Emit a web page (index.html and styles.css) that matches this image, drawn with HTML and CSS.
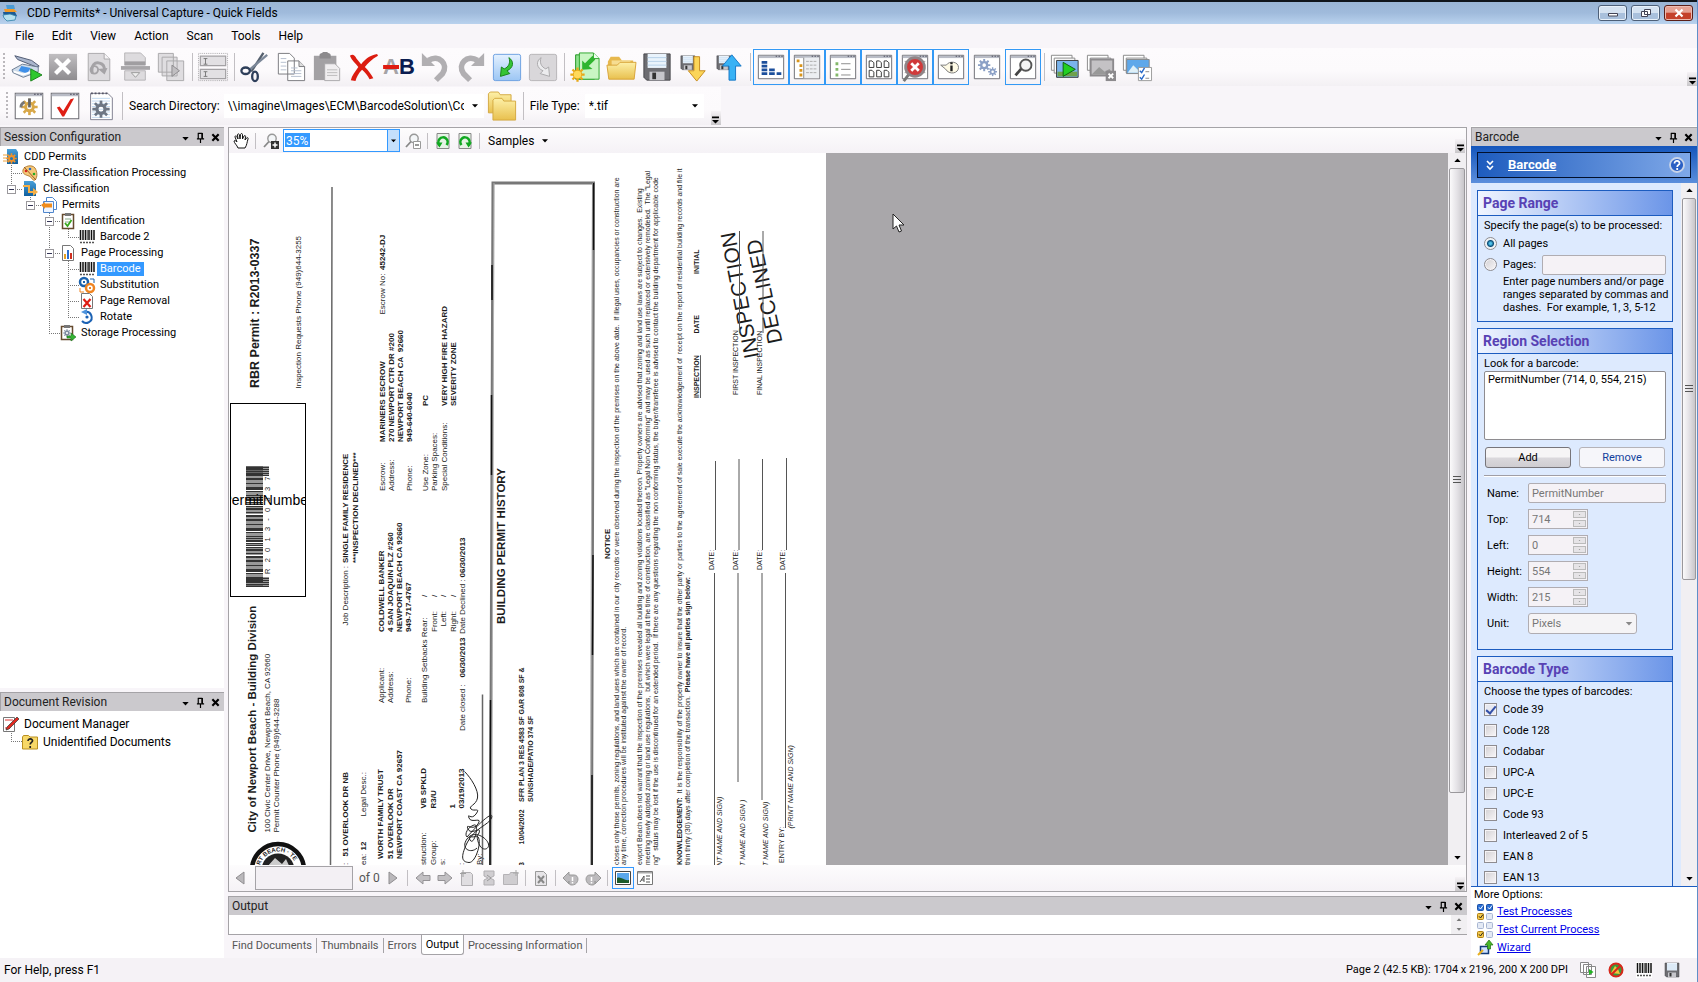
FILE: index.html
```html
<!DOCTYPE html>
<html lang="en">
<head>
<meta charset="utf-8">
<title>CDD Permits* - Universal Capture - Quick Fields</title>
<link rel="stylesheet" href="styles.css">
</head>
<body>
<svg class="defs" width="0" height="0" aria-hidden="true">
<defs>
<linearGradient id="gy" x1="0" y1="0" x2="0" y2="1"><stop offset="0" stop-color="#fdf0a8"/><stop offset="1" stop-color="#e8c04e"/></linearGradient>
<linearGradient id="gg" x1="0" y1="0" x2="0" y2="1"><stop offset="0" stop-color="#c0bec1"/><stop offset="1" stop-color="#8e8c8f"/></linearGradient>
<linearGradient id="gb" x1="0" y1="0" x2="0" y2="1"><stop offset="0" stop-color="#e4f1ff"/><stop offset="1" stop-color="#9cc6f4"/></linearGradient>
<linearGradient id="gn" x1="0" y1="0" x2="0" y2="1"><stop offset="0" stop-color="#4aa0d8"/><stop offset="1" stop-color="#0f5f9e"/></linearGradient>
<symbol id="win" viewBox="0 0 32 32"><path d="M2.500 3.500h27v25h-27z" fill="#fff" stroke="#6a6a70"/><path d="M3 4h26v2.500h-26z" fill="#b9bcc6"/><path d="M21 4.500h1.500M24 4.500h1.500M27 4.500h1.500" stroke="#445"/></symbol>
<symbol id="gear" viewBox="-10 -10 20 20"><g fill="none" stroke="currentColor" stroke-width="4"><circle r="4.500" stroke-width="3.500"/><path d="M0-9.500V-5M0 9.500V5M-9.500 0H-5M9.500 0H5M-6.700-6.700L-4-4M6.700 6.700L4 4M-6.700 6.700L-4 4M6.700-6.700L4-4" stroke-width="3"/></g></symbol>
<symbol id="page" viewBox="0 0 32 32"><path d="M4.500 1.500h17l6 6v23h-23z" fill="#dddbde" stroke="#a9a7aa"/><path d="M21.500 1.500v6h6" fill="#f6f4f6" stroke="#a9a7aa"/></symbol>
<symbol id="floppy" viewBox="0 0 32 32"><path d="M2 2h28v28h-25l-3-3z" fill="#6d6d72" stroke="#45454a"/><path d="M6 2h20v15H6z" fill="#e9f3fc"/><path d="M6 6h20M6 10h20M6 14h20" stroke="#b4cfe8" stroke-width="1"/><path d="M8 21h16v9H8z" fill="#c6c6cb"/><path d="M11 22h4v7h-4z" fill="#333"/></symbol>
<symbol id="pics" viewBox="0 0 32 32"><path d="M1.500 3.500h22v16h-22z" fill="#fff" stroke="#888"/><path d="M4.500 6.500h22v16h-22z" fill="#fff" stroke="#888"/></symbol>
<symbol id="bars" viewBox="0 0 16 16"><path d="M0 0h16v16H0z" fill="#fff"/><path d="M1.500 1v10M4 1v10M6.500 1v10M10 1v10M12.500 1v10M15 1v10" stroke="#111" stroke-width="1.500"/><path d="M8.300 1v10" stroke="#111" stroke-width=".7"/><path d="M1 13.500h14" stroke="#555" stroke-width="1.500" stroke-dasharray="2 1"/></symbol>
<symbol id="pin" viewBox="0 0 10 12"><path d="M2.500 1v6M1 7.500h8M7 1v6M2 1.500h5M5 8v4" fill="none" stroke="#000" stroke-width="1.300"/><path d="M6 1h1.600v6H6z"/></symbol>
<symbol id="cross" viewBox="0 0 10 10"><path d="M1.500 1.500l7 7M8.500 1.500l-7 7" stroke="#000" stroke-width="2.400"/></symbol>
<symbol id="down" viewBox="0 0 8 5"><path d="M0 0h8L4 4.500z"/></symbol>
<symbol id="more" viewBox="0 0 8 9"><path d="M0 0h8v2H0zM0 4h8L4 8z"/></symbol>
<symbol id="magnifier" viewBox="0 0 16 16"><circle cx="9" cy="5.500" r="4.200" fill="#f4f6f8" stroke="#999" stroke-width="1.400"/><path d="M6 8.500L1 14" stroke="#888" stroke-width="1.800"/></symbol>
<symbol id="rotate" viewBox="0 0 14 16"><path d="M1 .500h12v15H1z" fill="#e6f3e6" stroke="#888"/><path d="M4 12.500A4.600 4.600 0 1 1 10.500 12" fill="none" stroke="#10a820" stroke-width="2.600"/><path d="M0 9.500h6.500L3.500 14.500z" fill="#10a820"/></symbol>
<symbol id="garrow" viewBox="0 0 16 16"><path d="M1 8l7-6v3.500h7v5H8V14z" fill="#c2c0c3" stroke="#959396"/></symbol>
<symbol id="checks" viewBox="0 0 16 16"><rect x=".5" y="9.500" width="6" height="6" rx="1" fill="#f4c94c" stroke="#b07f10"/><path d="M2 12.300l1.500 1.700L6 10.500" fill="none" stroke="#222"/><rect x="9.500" y="9.500" width="6" height="6" rx="1" fill="#e3e9f4" stroke="#a9b6d2"/></symbol>
</defs>
</svg>

<header class="titlebar">
  <svg class="i16" viewBox="0 0 16 16"><path d="M4 0h8l1 4H5z" fill="#4b9bd2"/><path d="M2 4h10l3 3H3z" fill="#f09a28"/><path d="M1 7h12l2 4-3 1H2z" fill="#1c5a94"/><path d="M1 10l7-1 6 2-1 4-8 1-3-3z" fill="#b5e0ee" stroke="#2e7fa8" stroke-width=".8"/></svg>
  <h1>CDD Permits* - Universal Capture - Quick Fields</h1>
  <div class="winbtns">
    <button type="button" aria-label="Minimize"><svg viewBox="0 0 12 10"><path d="M1.500 5.500h9v2.500h-9z" fill="#fff" stroke="#445"/></svg></button>
    <button type="button" aria-label="Restore"><svg viewBox="0 0 12 10"><path d="M4.500 1.500h6v5h-6zM1.500 3.500h6v5h-6z" fill="#fff" stroke="#445"/></svg></button>
    <button type="button" class="close" aria-label="Close"><svg viewBox="0 0 12 10"><path d="M2.500 1.500l7 7M9.500 1.500l-7 7" stroke="#fff" stroke-width="2.200"/></svg></button>
  </div>
</header>

<nav class="menubar">
  <button type="button">File</button><button type="button">Edit</button><button type="button">View</button><button type="button">Action</button><button type="button">Scan</button><button type="button">Tools</button><button type="button">Help</button>
</nav>

<div class="toolbar main" role="toolbar" aria-label="Standard">
  <i class="grip"></i>
  <button type="button" aria-label="Scan"><svg viewBox="0 0 32 32"><path d="M3 4l18 5 8 6-3 1-20-8z" fill="#a9b5cc" stroke="#4b556e"/><path d="M0 19l11-6 17 3v5L12 27 1 22z" fill="#cfdcea" stroke="#6a7a90"/><path d="M10 15l10 2-4 6-9-3z" fill="#3f8fe8"/><path d="M2 21l10 3 10-3" fill="none" stroke="#fff" stroke-width="2"/><path d="M20 18l12 6.500L20 31z" fill="#2ec82e" stroke="#178017"/></svg></button>
  <button type="button" aria-label="Stop"><svg viewBox="0 0 32 32"><path d="M1 2h30v28H1z" fill="url(#gg)"/><path d="M8 8l15 15M23 8L8 23" stroke="#fff" stroke-width="4.500"/></svg></button>
  <button type="button" aria-label="Rescan page"><svg viewBox="0 0 32 32"><use href="#page"/><path d="M9 23c-2-9 3-13 8-11 5 1 5 5 5 8" fill="none" stroke="#a5a3a6" stroke-width="3"/><path d="M15 18l10-1-3 7z" fill="#a5a3a6"/><circle cx="11" cy="19" r="4" fill="none" stroke="#a5a3a6" stroke-width="2"/></svg></button>
  <button type="button" aria-label="Split page"><svg viewBox="0 0 32 32"><path d="M5 1h17l5 5v8H5zM5 20h22v10H5z" fill="#dddbde" stroke="#b5b3b6"/><path d="M5 10h22v4H5z" fill="#a09ea1"/><path d="M1 15h31v4H1z" fill="#a8a6a9"/><path d="M12 22h9l-4.500 5z" fill="#eee" stroke="#999"/></svg></button>
  <button type="button" aria-label="Process pages"><svg viewBox="0 0 32 32"><path d="M2.500 1.500h16v20h-16zM6.500 5.500h16v20h-16zM11.500 9.500h18v21h-18z" fill="#dfdde0" stroke="#a9a7aa"/><path d="M17 14v12l8-6z" fill="#c0bec1" stroke="#8c8a8d"/></svg></button>
  <i class="sep"></i>
  <button type="button" aria-label="Fields"><svg viewBox="0 0 32 32"><path d="M.5 1.500h31v29H.5z" fill="none" stroke="#a9a7aa" stroke-dasharray="1 1"/><path d="M2.500 4.500h27v10h-27zM2.500 18.500h27v10h-27z" fill="#e2e0e3" stroke="#a3a1a4" stroke-width="1.300"/><path d="M6 7h4M8 7v6M6 13h4M6 21h4M8 21v5M6 26h4" stroke="#777"/></svg></button>
  <i class="sep"></i>
  <button type="button" aria-label="Cut"><svg viewBox="0 0 32 32"><path d="M25 1L12 21" stroke="#55606e" stroke-width="2.500"/><path d="M29 3L10 19" stroke="#7b8798" stroke-width="2.500"/><g fill="none" stroke="#2e3f5a" stroke-width="2.500"><ellipse cx="6" cy="20" rx="4.500" ry="3.500"/><ellipse cx="16" cy="26" rx="3" ry="5"/></g></svg></button>
  <button type="button" aria-label="Copy"><svg viewBox="0 0 32 32"><path d="M2.500 1.500h12l5 5v17h-17zM12.500 9.500h12l6 6v15h-18z" fill="#fff" stroke="#77777c"/><path d="M24.500 9.500v6h6" fill="#ddd" stroke="#77777c"/><path d="M5 7h6M5 11h6M5 15h6M5 19h6M16 17h7M16 20h11M16 23h11M16 26h11" stroke="#b4bece"/></svg></button>
  <button type="button" aria-label="Paste"><svg viewBox="0 0 32 32"><path d="M2 4h24v26H2z" fill="#a3a1a4"/><path d="M8 4c0-3 2-2 4-4h4c2 2 4 1 4 4v3H8z" fill="#8c8a8d"/><path d="M13.500 12.500h11l5 5v13h-16z" fill="#f0eef0" stroke="#a9a7aa"/><path d="M16 19h11M16 22h11M16 25h11" stroke="#bbb"/></svg></button>
  <button type="button" aria-label="Delete"><svg viewBox="0 0 32 32"><path d="M2 4c3-2 5-1 7 3l5 6c4-5 8-9 17-11l1 2c-7 4-11 8-14 12 4 4 7 8 9 12l-4 1c-2-4-5-7-8-10-4 4-6 8-7 12l-5-1c1-5 5-9 8-14C8 12 4 9 2 4z" fill="#dc1c10"/></svg></button>
  <button type="button" aria-label="Replace text" class="ab"><s>A</s><b>B</b></button>
  <button type="button" aria-label="Undo"><svg viewBox="0 0 32 32"><path d="M9 9c11-7 22 4 15 14l-7 7" fill="none" stroke="#b1afb2" stroke-width="6"/><path d="M2 1v14h14z" fill="#b1afb2"/></svg></button>
  <button type="button" aria-label="Redo"><svg viewBox="0 0 32 32"><path d="M23 9C12 2 1 13 8 23l7 7" fill="none" stroke="#b1afb2" stroke-width="6"/><path d="M30 1v14H16z" fill="#b1afb2"/></svg></button>
  <button type="button" aria-label="Apply"><svg viewBox="0 0 32 32"><rect x="1.500" y="2.500" width="29" height="28" rx="2" fill="url(#gb)" stroke="#6a9ee0"/><path d="M18 6c6 4 5 11-2 14l3 3-10 3 1-10 3 2c5-2 7-7 5-12z" fill="#35c435" stroke="#168016"/></svg></button>
  <button type="button" aria-label="Revert"><svg viewBox="0 0 32 32"><rect x="1.500" y="2.500" width="29" height="28" rx="2" fill="#d9d7da" stroke="#b5b3b6"/><path d="M14 6c-6 4-5 11 2 14l-3 3 10 3-1-10-3 2c-5-2-7-7-5-12z" fill="#ececee" stroke="#a9a7aa"/></svg></button>
  <i class="sep"></i>
  <button type="button" aria-label="New session"><svg viewBox="0 0 32 32"><path d="M6 3h20v26H6z" fill="#8fe08f" stroke="#1d941d"/><path d="M10 1h15l6 6v22H10z" fill="#c9f5c4" stroke="#2aa52a"/><path d="M27 8L20 15l4 3-11 1V9l3 3 8-8z" fill="#2fb52f"/><path d="M25 1v6h6" fill="#effff0" stroke="#2aa52a"/><g color="#e8a818"><use href="#gear" x="0" y="16" width="16" height="16"/></g><circle cx="8" cy="24" r="4" fill="#ffd95a"/></svg></button>
  <button type="button" aria-label="Open"><svg viewBox="0 0 32 32"><path d="M2 10l3-5h9l3 4h12v8H2z" fill="#e7b84d"/><path d="M6 9h20v9H6z" fill="#f6dd92"/><path d="M1 14h11l3-3h17l-2 18H3z" fill="url(#gy)" stroke="#d7a236"/></svg></button>
  <button type="button" aria-label="Save"><svg viewBox="0 0 32 32"><use href="#floppy"/></svg></button>
  <button type="button" aria-label="Save down"><svg viewBox="0 0 32 32"><use href="#floppy" x="2" y="3" width="17" height="17"/><path d="M17 5h6v15h6L20 31 11 20h6z" fill="#fbd558" stroke="#c48a1c"/></svg></button>
  <button type="button" aria-label="Publish"><svg viewBox="0 0 32 32"><use href="#floppy" x="2" y="3" width="17" height="17"/><path d="M16 30h7V15h6L19 3 9 15h7z" fill="#38b2f5" stroke="#1575c4"/></svg></button>
  <i class="sep"></i>
  <button type="button" class="on" aria-label="Statistics"><svg viewBox="0 0 32 32"><use href="#win"/><path d="M6 11h6M6 15h6M6 19h6M6 23h6M14 19h6M14 23h6M22 23h5" stroke="#1c4f9c" stroke-width="3"/></svg></button>
  <button type="button" class="on" aria-label="Session pane"><svg viewBox="0 0 32 32"><use href="#win"/><path d="M12 6h17v22H12z" fill="#eceef2"/><path d="M5 8h3v3H5zM8 13h3v3H8zM8 18h3v3H8zM8 23h3v3H8z" fill="#d8941c"/><path d="M12.500 6v22" stroke="#888"/><path d="M15 10h12M15 14h12M15 18h12M15 22h12" stroke="#aaa" stroke-dasharray="3 1"/></svg></button>
  <button type="button" class="on" aria-label="List pane"><svg viewBox="0 0 32 32"><use href="#win"/><path d="M8 11h3v3H8zM8 17h3v3H8zM8 23h3v3H8z" fill="#83b86a"/><path d="M14 12.500h10M14 18.500h10M14 24.500h10" stroke="#888"/></svg></button>
  <button type="button" class="on" aria-label="Thumbnails pane"><svg viewBox="0 0 32 32"><use href="#win"/><path d="M5.500 9.500h3l2 2v5h-5zM13.500 9.500h3l2 2v5h-5zM21.500 9.500h3l2 2v5h-5zM5.500 19.500h3l2 2v5h-5zM13.500 19.500h3l2 2v5h-5zM21.500 19.500h3l2 2v5h-5z" fill="#fff" stroke="#333"/></svg></button>
  <button type="button" class="on" aria-label="Errors pane"><svg viewBox="0 0 32 32"><use href="#win"/><path d="M5 10h22M5 14h22M5 18h22M5 22h22" stroke="#999"/><path d="M10 23L4 31" stroke="#777" stroke-width="3"/><circle cx="16" cy="16" r="10" fill="#d0393a" stroke="#8f8487" stroke-width="3"/><path d="M12 12l8 8M20 12l-8 8" stroke="#fff" stroke-width="3"/></svg></button>
  <button type="button" class="on" aria-label="Information pane"><svg viewBox="0 0 32 32"><use href="#win"/><path d="M5 14l6 0c3-5 13-4 13 2.500S14 25 10 18z" fill="#fffbe6" stroke="#777"/><path d="M16.500 11v2M16.500 14.500v6" stroke="#222" stroke-width="2.500"/></svg></button>
  <button type="button" aria-label="Options"><svg viewBox="0 0 32 32"><use href="#win"/><g color="#8ba0c6"><use href="#gear" x="6" y="7" width="14" height="14"/><use href="#gear" x="17" y="16" width="10" height="10"/></g></svg></button>
  <button type="button" class="on" aria-label="Find"><svg viewBox="0 0 32 32"><use href="#win"/><circle cx="19" cy="14" r="6" fill="#f4f4f4" stroke="#555" stroke-width="2"/><path d="M14 18l-6 7" stroke="#444" stroke-width="3"/></svg></button>
  <i class="sep"></i>
  <button type="button" aria-label="Run"><svg viewBox="0 0 32 32"><use href="#pics"/><path d="M7 9h23v18H7z" fill="#7ab4ec" stroke="#333"/><path d="M8 21h21v5H8z" fill="#6fa24c"/><path d="M14 11v15l13-7.500z" fill="#22cf22" stroke="#0a600a"/></svg></button>
  <button type="button" aria-label="Cancel run"><svg viewBox="0 0 32 32"><use href="#pics"/><path d="M5 8h24v17H5z" fill="#c4c2c5" stroke="#8c8a8d" stroke-width="2"/><path d="M6 24l8-8 6 5 5-3 4 6z" fill="#999"/><path d="M21 20h11v11H21z" fill="#8c8a8d"/><path d="M24 23l5 5M29 23l-5 5" stroke="#fff" stroke-width="2"/></svg></button>
  <button type="button" aria-label="Review"><svg viewBox="0 0 32 32"><use href="#pics"/><path d="M5 8h24v15H5z" fill="#5fa8ea" stroke="#888"/><path d="M6 22l6-8 6 6 5-4 5 6z" fill="#dff0f8"/><path d="M17.500 16.500h14v14h-14z" fill="#fff" stroke="#999"/><path d="M19 20l2 2 3-5M19 27l2 2 3-5" fill="none" stroke="#2668c8" stroke-width="1.500"/><path d="M25 21h4M25 28h4" stroke="#888"/></svg></button>
  <span class="fill"></span>
  <button type="button" class="overflow" aria-label="More buttons"><svg><use href="#more"/></svg></button>
</div>

<div class="toolbar source" role="toolbar" aria-label="Source">
  <i class="grip"></i>
  <button type="button" aria-label="Source options"><svg viewBox="0 0 32 32"><use href="#win" x="-2" y="-3" width="36" height="37"/><g color="#d8a848"><use href="#gear" x="7" y="7" width="19" height="19"/></g><path d="M7 17c0-3 2-5 4-6" fill="none" stroke="#777" stroke-width="3"/><path d="M16.500 7v10" stroke="#666" stroke-width="3"/></svg></button>
  <button type="button" aria-label="Validate"><svg viewBox="0 0 32 32"><use href="#win" x="-2" y="-3" width="36" height="37"/><path d="M7 17l3-1 4 5L22 8l4-1-11 20h-2z" fill="#df1e14"/></svg></button>
  <button type="button" aria-label="Page options"><svg viewBox="0 0 32 32"><path d="M4.500 1.500h19l5 5v24h-24z" fill="#fff" stroke="#778"/><path d="M5 1.500h18" stroke="#556" stroke-dasharray="2 2" stroke-width="2"/><path d="M6 7h20M6 10h20M6 13h20M6 16h20M6 19h20M6 22h20M6 25h20M6 28h20" stroke="#bdd6ee"/><g color="#6d7683"><use href="#gear" x="6" y="9" width="20" height="20"/></g></svg></button>
  <i class="sep"></i>
  <label for="dir">Search Directory:</label>
  <span class="pick dir"><select id="dir"><option>\\imagine\Images\ECM\BarcodeSolution\CodeBased</option></select><svg><use href="#down"/></svg></span>
  <button type="button" aria-label="Browse"><svg viewBox="0 0 32 32"><path d="M1 2l2-2h9l2 3h12v20H1z" fill="url(#gy)" stroke="#d2a63c"/><path d="M6 9l2-2h8l2 3h13v21H6z" fill="url(#gy)" stroke="#d2a63c"/></svg></button>
  <i class="sep"></i>
  <label for="ftype">File Type:</label>
  <span class="pick ftype"><select id="ftype"><option>*.tif</option></select><svg><use href="#down"/></svg></span>
  <button type="button" class="overflow" aria-label="More buttons"><svg><use href="#more"/></svg></button>
</div>

<main class="workspace">
  <aside class="side left">
    <section class="pane session">
      <header class="panehead"><h2>Session Configuration</h2><button type="button" aria-label="Menu"><svg class="dn"><use href="#down"/></svg></button><button type="button" aria-label="Pin"><svg class="pn"><use href="#pin"/></svg></button><button type="button" aria-label="Close pane"><svg class="cr"><use href="#cross"/></svg></button></header>
      <div class="tree small">
        <div class="row root"><svg class="i16" viewBox="0 0 16 16"><path d="M4 0h9l2 3v12H4z" fill="url(#gn)"/><path d="M0 6h5M0 9h5M0 12h5" stroke="#f0a23a"/><g color="#f0922a"><use href="#gear" x="3" y="4" width="11" height="11"/></g></svg>CDD Permits</div>
        <ul>
          <li><div class="row"><i class="slot"></i><svg class="i16" viewBox="0 0 16 16"><path d="M1 5c1-4 9-6 12-2 2 3 3 9 0 12-3 1-3-3-6-4S0 9 1 5z" fill="#f5c878" stroke="#b4803a"/><circle cx="4" cy="6" r="1.300" fill="#d22"/><circle cx="8" cy="4" r="1.300" fill="#26c"/><circle cx="12" cy="9" r="1.300" fill="#2a2"/><path d="M2 2l12 13" stroke="#9a5a20"/></svg>Pre-Classification Processing</div></li>
          <li><div class="row"><i class="slot"><i class="minus"></i></i><svg class="i16" viewBox="0 0 16 16"><path d="M2 0h9l3 3v12H2z" fill="url(#gn)"/><path d="M1 5h6v6h5" fill="none" stroke="#f5b048" stroke-width="2"/><path d="M11 7l5 4-5 4z" fill="#f5b048"/></svg>Classification</div>
            <ul><li><div class="row"><i class="slot"><i class="minus"></i></i><svg class="i16" viewBox="0 0 16 16"><path d="M5.500.5h6l4 4v8h-10z" fill="#fff" stroke="#4f86cc"/><path d="M2.500 4.500h10v11h-10z" fill="#eef5ff" stroke="#4f86cc"/><path d="M0 8l4-3v1.500h7v4H4V12z" fill="#f08c1c"/></svg>Permits</div>
              <ul>
                <li><div class="row"><i class="slot"><i class="minus"></i></i><svg class="i16" viewBox="0 0 16 16"><path d="M2.500 1.500h11v14h-11z" fill="#fff" stroke="#654a2e" stroke-width="1.500"/><path d="M5 0h6v3H5z" fill="#777"/><path d="M5 6h6M5 9h6" stroke="#8a8"/><path d="M5 10l2.500 3 4-6" fill="none" stroke="#3aa81e" stroke-width="1.800"/></svg>Identification</div>
                  <ul><li><div class="row"><i class="slot"></i><svg class="i16"><use href="#bars"/></svg>Barcode 2</div></li></ul></li>
                <li><div class="row"><i class="slot"><i class="minus"></i></i><svg class="i16" viewBox="0 0 16 16"><path d="M2.500.5h8l3 3v12h-11z" fill="#fff" stroke="#777"/><path d="M5 9v5" stroke="#e9a020" stroke-width="2"/><path d="M8 5v9" stroke="#2d6fd0" stroke-width="2"/><path d="M11 8v6" stroke="#d03020" stroke-width="2"/></svg>Page Processing</div>
                  <ul>
                    <li><div class="row sel"><i class="slot"></i><svg class="i16"><use href="#bars"/></svg><span>Barcode</span></div></li>
                    <li><div class="row"><i class="slot"></i><svg class="i16" viewBox="0 0 16 16"><circle cx="5" cy="5" r="4" fill="#fff" stroke="#1a62ae" stroke-width="2.500"/><circle cx="11" cy="11" r="4" fill="#fff" stroke="#ef8422" stroke-width="2.500"/><path d="M4 4h2v2H4z" fill="#1a62ae"/><path d="M10 10h2v2h-2z" fill="#ef8422"/><path d="M11 2h4v4" fill="none" stroke="#1a62ae"/><path d="M1 11v4h4" fill="none" stroke="#ef8422"/></svg>Substitution</div></li>
                    <li><div class="row"><i class="slot"></i><svg class="i16" viewBox="0 0 16 16"><path d="M2.500.5h8l3 3v12h-11z" fill="#fff" stroke="#777"/><path d="M4.500 6l7 8M11.500 6l-7 8" stroke="#dd1c14" stroke-width="2.200"/></svg>Page Removal</div></li>
                    <li><div class="row"><i class="slot"></i><svg class="i16" viewBox="0 0 16 16"><path d="M6 3a5.500 5.500 0 1 1-3 9" fill="none" stroke="#1c62b4" stroke-width="2"/><path d="M2 3l6-3v6z" fill="#4e93dc"/><circle cx="8" cy="8" r="1.600" fill="#1c62b4"/></svg>Rotate</div></li>
                  </ul></li>
                <li><div class="row"><i class="slot"></i><svg class="i16" viewBox="0 0 16 16"><path d="M1.500 1.500h11v13h-11z" fill="#fff" stroke="#654a2e" stroke-width="1.500"/><path d="M4 0h6v3H4z" fill="#777"/><g color="#7e8ba0"><use href="#gear" x="3" y="4" width="8" height="8"/></g><path d="M7 11h4V8l5 4-5 4v-3H7z" fill="#35b435" stroke="#177217" stroke-width=".6"/></svg>Storage Processing</div></li>
              </ul></li></ul></li>
        </ul>
      </div>
    </section>
    <section class="pane revision">
      <header class="panehead"><h2>Document Revision</h2><button type="button" aria-label="Menu"><svg class="dn"><use href="#down"/></svg></button><button type="button" aria-label="Pin"><svg class="pn"><use href="#pin"/></svg></button><button type="button" aria-label="Close pane"><svg class="cr"><use href="#cross"/></svg></button></header>
      <div class="tree tall">
        <div class="row root"><svg class="i16" viewBox="0 0 16 16"><path d="M.5 1.500h11v14H.5z" fill="#fff" stroke="#777"/><path d="M2 4h8M2 12h5" stroke="#d33"/><path d="M14 1l2 2-10 10-3 1 1-3z" fill="#e02a20" stroke="#333" stroke-width=".7"/></svg>Document Manager</div>
        <ul><li><div class="row"><i class="slot"></i><svg class="i16" viewBox="0 0 16 16"><path d="M.5 3l1-1.500h5L8 3h7.500v12H.5z" fill="#f7d868" stroke="#b98f20"/><path d="M6 7c0-3 5-2.500 4.500 0C10.300 8.500 8.200 8.300 8.200 10.500M8.200 12v2" fill="none" stroke="#222" stroke-width="1.700"/></svg>Unidentified Documents</div></li></ul>
      </div>
    </section>
  </aside>

  <div class="center">
    <section class="viewer">
      <div class="bar vtop" role="toolbar" aria-label="View">
        <button type="button" aria-label="Pan"><svg class="i16" viewBox="0 0 16 16"><path d="M5 15c-1-3-4-5-4-7 1-1 2 0 3 1L2 4c0-2 2-1 2 0l1 2-.500-4c0-2 2-1 2 0L7 6l.500-4.500c.5-1.500 2-1 2 0L9.500 6 11 3c1-1 2 0 1.500 1L12 7l1.500-2c1-1 2 0 1.500 1-1 3-1 6-3 9z" fill="#fff" stroke="#111"/></svg></button>
        <i class="sep"></i>
        <button type="button" aria-label="Zoom in"><svg class="i16" viewBox="0 0 16 16"><use href="#magnifier"/><path d="M8 8h8v8H8z" fill="#333"/><path d="M9.500 12h5M12 9.500v5" stroke="#fff" stroke-width="1.500"/></svg></button>
        <span class="combo"><input type="text" value="35%" aria-label="Zoom"><button type="button" aria-label="Zoom levels"><svg><use href="#down"/></svg></button></span>
        <button type="button" aria-label="Zoom out"><svg class="i16" viewBox="0 0 16 16"><use href="#magnifier"/><path d="M8.500 8.500h7v7h-7z" fill="#fff" stroke="#999"/><path d="M10 12h4" stroke="#777" stroke-width="1.500"/></svg></button>
        <i class="sep"></i>
        <button type="button" aria-label="Rotate left"><svg class="i16"><use href="#rotate"/></svg></button>
        <button type="button" aria-label="Rotate right"><svg class="i16" viewBox="0 0 16 16"><g transform="translate(16) scale(-1 1)"><use href="#rotate" width="16" height="16"/></g></svg></button>
        <i class="sep"></i>
        <button type="button" class="text">Samples <svg><use href="#down"/></svg></button>
        <span class="fill"></span>
        <button type="button" class="overflow" aria-label="More buttons"><svg><use href="#more"/></svg></button>
      </div>
      <div class="canvas">
        <svg class="scan" viewBox="0 0 1194 1424" role="img" aria-label="Scanned permit, page 2">
          <rect width="1194" height="1424" fill="#fff"/>
          <g transform="translate(0 1424) rotate(-90)">
            <g class="t25"><text x="954" y="60">RBR Permit : R2013-0337</text></g>
            <g class="t23"><text x="65" y="54">City of Newport Beach - Building Division</text><text x="482" y="551">BUILDING PERMIT HISTORY</text></g>
            <g class="t16">
              <text x="953" y="144">Inspection Requests Phone (949)644-3255</text>
              <text x="65" y="81">100 Civic Center Drive, Newport Beach, CA 92660</text>
              <text x="65" y="100">Permit Counter Phone (949)644-3288</text>
              <text x="1101" y="311">Escrow No:</text>
              <text x="748" y="311">Escrow:</text><text x="748" y="329">Address:</text><text x="748" y="366">Phone:</text>
              <text x="748" y="397">Use Zone:</text><text x="748" y="416">Parking Spaces:</text><text x="748" y="435">Special Conditions:</text>
              <text x="479" y="238">Job Description :</text>
              <text x="324" y="309">Applicant:</text><text x="324" y="327">Address:</text><text x="324" y="364">Phone:</text>
              <text x="324" y="395">Building Setbacks Rear:</text><text x="466" y="415">Front:</text><text x="477" y="434">Left:</text><text x="466" y="453">Right:</text>
              <text x="536" y="395">/</text><text x="536" y="415">/</text><text x="536" y="434">/</text><text x="536" y="453">/</text>
              <text x="268" y="471">Date closed :</text><text x="462" y="471">Date Declined :</text>
              <text x="0" y="237">:</text><text x="0" y="273">ea:</text><text x="97" y="273">Legal Desc.:</text>
              <text x="0" y="394">struction:</text><text x="0" y="413">Group:</text><text x="0" y="432">s:</text><text x="0" y="469">:</text><text x="0" y="505">By:</text>
            </g>
            <g class="b16">
              <text x="1190" y="311">45242-DJ</text>
              <text x="846" y="311">MARINERS ESCROW</text><text x="846" y="329">270 NEWPORT CTR DR #200</text><text x="846" y="348">NEWPORT BEACH CA&#160; 92660</text><text x="846" y="366">949-640-6040</text>
              <text x="918" y="397">PC</text><text x="918" y="435">VERY HIGH FIRE HAZARD</text><text x="918" y="454">SEVERITY ZONE</text>
              <text x="604" y="238">SINGLE FAMILY RESIDENCE</text><text x="604" y="257">***INSPECTION DECLINED***</text>
              <text x="466" y="309">COLDWELL BANKER</text><text x="466" y="328">4 SAN JOAQUIN PLZ #260</text><text x="466" y="346">NEWPORT BEACH CA 92660</text><text x="466" y="364">949-717-4767</text>
              <text x="375" y="471">06/30/2013</text><text x="575" y="471">06/30/2013</text>
              <text x="17" y="237">51 OVERLOOK DR NB</text><text x="29" y="273">12</text>
              <text x="12" y="308">WORTH FAMILY TRUST</text><text x="12" y="327">51 OVERLOOK DR</text><text x="12" y="345">NEWPORT COAST CA 92657</text>
              <text x="113" y="394">VB SPKLD</text><text x="113" y="413">R3/U</text><text x="113" y="451">1</text><text x="113" y="470">03/19/2013</text>
              <text x="612" y="762">NOTICE</text>
            </g>
            <g class="b14">
              <text x="126" y="590">SFR PLAN 3 RES 4583 SF GAR 808 SF &amp;</text><text x="126" y="607">SUNSHADE/PATIO 374 SF</text>
              <text x="41" y="590">10/04/2002</text><text x="-2" y="590">3</text>
              <text x="934" y="940" text-decoration="underline">INSPECTION</text><text x="1063" y="940">DATE</text><text x="1182" y="940">INITIAL</text>
            </g>
            <g class="t14">
              <text x="0" y="780">closes only those permits, zoning regulations, and land uses which are contained in our city records or were observed during the inspection of the premises on the above date.&#160; If illegal uses, occupancies or construction are</text>
              <text x="0" y="793">any time, correction procedures will be instituted against the owner of record.</text>
              <text x="0" y="826">ewport Beach does not warrant that the inspection of the premises revealed all building and zoning violations located thereon. Property owners are advised that zoning and land use laws are subject to changes.&#160; Existing</text>
              <text x="0" y="841">meeting newly adopted zoning or land use regulations,&#160; but which were legal at the time of construction, are classified as "Legal Non Conforming" and may be used as such until replaced or extensively remodeled.&#160; The "Legal</text>
              <text x="0" y="857">ng"&#160; status may be lost if the use is discontinued for an extended period.&#160; If there are any questions regarding the non conforming status, the buyer/transferee is advised to contact the building department for applicable code</text>
              <text x="0" y="906"><tspan font-weight="bold">KNOWLEDGEMENT:</tspan>&#160; It is the responsibility of the property owner to insure that the other party or parties to the agreement of sale execute the acknowledgement of&#160; receipt on the report of residential building records and file it</text>
              <text x="0" y="921">thin thirty (30) days after completion of the transaction.&#160; <tspan font-weight="bold">Please have all parties sign below:</tspan></text>
              <text x="940" y="1018">FIRST INSPECTION</text><text x="940" y="1066">FINAL INSPECTION</text>
              <text x="590" y="970">DATE:</text><text x="590" y="1017">DATE:</text><text x="590" y="1065">DATE:</text><text x="590" y="1112">DATE:</text>
              <text x="4" y="1110">ENTRY BY:</text>
              <g font-style="italic"><text x="-2" y="985">NT NAME AND SIGN)</text><text x="-2" y="1031">T NAME AND SIGN )</text><text x="-2" y="1078">T NAME AND SIGN)</text><text x="73" y="1127">(PRINT NAME AND SIGN)</text></g>
            </g>
            <g class="stamp"><text x="1016" y="1060" transform="rotate(-11 1016 1060)">INSPECTION</text><text x="1046" y="1107" transform="rotate(-12 1046 1107)">DECLINED</text></g>
            <g stroke="#555" stroke-width="2" fill="none">
              <path d="M0 203L700 205 1356 206M0 507h341" stroke="#666" stroke-width="3"/>
              <path d="M1064 1021h204M1064 1068h204M630 973h178M630 1020h182M630 1067h182M630 1115h184M0 971h584M166 1018h418M130 1066h454M74 1113h510"/>
              <path d="M0 523L1364 528V729L0 725" stroke="#777" stroke-width="6"/>
              <path d="M0 525L1364 530M0 723L1364 727" stroke="#eee" stroke-width="1"/>
              <path d="M0 522L330 523M780 525L940 525M1130 526L1200 526M0 726L180 726M420 727L620 728M1230 729L1364 729" stroke="#111" stroke-width="3"/>
            </g>
            <g stroke="#333"><path d="M556 51h242" stroke-width="34" stroke-dasharray="3 1 2 2 5 1 2 1 4 2 1 1 3 2 6 1 2 2"/><path d="M556 57h20M778 57h20" stroke-width="46" stroke-dasharray="3 1 2 1 4 1"/></g>
            <g class="t15"><text x="582" y="81">R&#160;&#160; 2&#160;&#160; 0&#160;&#160; 1&#160;&#160; 3&#160;&#160; -&#160;&#160; 0&#160;&#160; 3&#160;&#160; 3&#160;&#160; 7</text></g>
          </g>
          <path d="M471 1237C484 1250 500 1275 497 1290S478 1306 484 1312 504 1308 494 1322 476 1318 480 1330 508 1326 498 1342 472 1338 478 1352 506 1344 500 1360 474 1360 482 1374 502 1340 490 1344 470 1362 476 1368C510 1330 530 1316 525 1330S490 1350 476 1380 466 1418 480 1419 508 1372 496 1366C500 1402 522 1394 519 1382S490 1352 476 1372 484 1402 496 1390" fill="none" stroke="#222" stroke-width="2"/>
          <g transform="translate(98 1434)"><circle r="52" fill="#fff" stroke="#111" stroke-width="9"/><circle r="33" fill="#222"/><path d="M-22-6L-6-24 8-12 16-22 26 0z" fill="#ccc"/><path id="ring" d="M-37 0A37 37 0 0 1 37 0" fill="none"/><text class="seal"><textPath href="#ring">ORT BEACH · TE</textPath></text></g>
          <svg class="region" x="2" y="500" width="152" height="390"><rect x="1" y="1" width="150" height="386" fill="none" stroke="#000" stroke-width="2"/><text class="zone" x="75" y="204" text-anchor="middle">PermitNumber</text></svg>
        </svg>
        <svg class="pointer" viewBox="0 0 13 20"><path d="M1 1v15l3.500-3 2.500 6 2.500-1-2.500-6h5z" fill="#fff" stroke="#222"/></svg>
      </div>
      <div class="scroll vscroll"><svg><use href="#down"/></svg><div class="thumb"><i class="ribs"></i></div><svg><use href="#down"/></svg></div>
      <div class="bar vbottom" role="toolbar" aria-label="Pages">
        <button type="button" aria-label="Previous"><svg class="i16" viewBox="0 0 16 16"><path d="M12 2v12L4 8z" fill="#bab8bb" stroke="#8f8d90"/></svg></button>
        <input class="pageno" type="text" aria-label="Page number">
        <span class="of">of 0</span>
        <button type="button" aria-label="Next"><svg class="i16" viewBox="0 0 16 16"><path d="M4 2v12l8-6z" fill="#bab8bb" stroke="#8f8d90"/></svg></button>
        <i class="sep"></i>
        <button type="button" aria-label="Back"><svg class="i16"><use href="#garrow"/></svg></button>
        <button type="button" aria-label="Forward"><svg class="i16" viewBox="0 0 16 16"><g transform="translate(16) scale(-1 1)"><use href="#garrow" width="16" height="16"/></g></svg></button>
        <button type="button" aria-label="New page"><svg class="i16" viewBox="0 0 16 16"><path d="M2.500 2.500h9l2 2v11h-11z" fill="#e0dee1" stroke="#b0aeb1"/><path d="M4 0v7M1 3.500h6" stroke="#a0a0a0"/></svg></button>
        <button type="button" aria-label="Split"><svg class="i16" viewBox="0 0 16 16"><path d="M3 1h10v5l-4 2 4 2v5H3v-5l4-2-4-2z" fill="#d0ced1" stroke="#b0aeb1"/><path d="M6 5l4 3-4 3" fill="none" stroke="#999"/></svg></button>
        <button type="button" aria-label="New folder"><svg class="i16" viewBox="0 0 16 16"><path d="M.5 4.500h6l1-2h7v12H.5z" fill="#cfcdd0" stroke="#b5b3b6"/><path d="M13 0v6M10 3h6" stroke="#a9a9a9"/></svg></button>
        <i class="sep"></i>
        <button type="button" aria-label="Delete page"><svg class="i16" viewBox="0 0 16 16"><path d="M2.500 1.500h8l3 3v11h-11z" fill="#e6e4e7" stroke="#999"/><path d="M5 6l6 7M11 6l-6 7" stroke="#888" stroke-width="2"/></svg></button>
        <i class="sep"></i>
        <button type="button" aria-label="Previous error"><svg class="i16" viewBox="0 0 16 16"><path d="M0 8l6-6v3h5c6 0 5 10-2 10-3 0-4-2-3-4v3z" fill="#bcbabd" stroke="#999"/><path d="M9.500 7v4M9.500 12v1.500" stroke="#fff" stroke-width="1.500"/></svg></button>
        <button type="button" aria-label="Next error"><svg class="i16" viewBox="0 0 16 16"><path d="M16 8l-6-6v3H5C-1 5 0 15 7 15c3 0 4-2 3-4v3z" fill="#bcbabd" stroke="#999"/><path d="M6.500 7v4M6.500 12v1.500" stroke="#fff" stroke-width="1.500"/></svg></button>
        <i class="sep"></i>
        <button type="button" class="on" aria-label="Image view"><svg class="i16" viewBox="0 0 16 16"><path d="M.5 1.500h15v13H.5z" fill="#fff" stroke="#444"/><path d="M2 3h12v10H2z" fill="#5aa7ec"/><path d="M2 8c4-2 7 3 12 2v3H2z" fill="#1d5a2c"/></svg></button>
        <button type="button" aria-label="Text view"><svg class="i16" viewBox="0 0 16 16"><path d="M.5 1.500h15v13H.5z" fill="#fff" stroke="#777"/><path d="M1 2h14v1.500H1z" fill="#aaa"/><path d="M3 12l4-6v6M4 10h3M9 6h4M9 9h4M9 12h4" fill="none" stroke="#555"/></svg></button>
        <span class="fill"></span>
        <button type="button" class="overflow" aria-label="More buttons"><svg><use href="#more"/></svg></button>
      </div>
    </section>
    <section class="output">
      <header class="panehead"><h2>Output</h2><button type="button" aria-label="Menu"><svg class="dn"><use href="#down"/></svg></button><button type="button" aria-label="Pin"><svg class="pn"><use href="#pin"/></svg></button><button type="button" aria-label="Close pane"><svg class="cr"><use href="#cross"/></svg></button></header>
      <div class="outbody"><div class="mini"><svg><use href="#down"/></svg><svg><use href="#down"/></svg></div></div>
      <div class="tabs small" role="tablist"><button type="button" role="tab">Find Documents</button><button type="button" role="tab">Thumbnails</button><button type="button" role="tab">Errors</button><button type="button" role="tab" class="cur" aria-selected="true">Output</button><button type="button" role="tab">Processing Information</button></div>
    </section>
  </div>

  <aside class="side right">
    <header class="panehead"><h2>Barcode</h2><button type="button" aria-label="Menu"><svg class="dn"><use href="#down"/></svg></button><button type="button" aria-label="Pin"><svg class="pn"><use href="#pin"/></svg></button><button type="button" aria-label="Close pane"><svg class="cr"><use href="#cross"/></svg></button></header>
    <div class="banner"><div class="bannerbox">
      <svg class="chev" viewBox="0 0 8 10"><path d="M1 1l3 3 3-3M1 6l3 3 3-3" fill="none" stroke="#fff" stroke-width="1.600"/></svg>
      <a href="#">Barcode</a>
      <svg class="help" viewBox="0 0 16 16"><circle cx="8" cy="8" r="7" fill="#2a5fc4" stroke="#c9d4e8" stroke-width="1.800"/><path d="M5.500 6.500c0-4 5.500-3 5 0-.3 1.500-2.300 1.500-2.300 3.500M8.200 11v2" fill="none" stroke="#fff" stroke-width="1.800"/></svg>
    </div></div>
    <div class="props small">
      <div class="cards">
        <section class="card">
          <h3>Page Range</h3>
          <div class="cbody range">
            <p>Specify the page(s) to be processed:</p>
            <label class="opt"><input type="radio" name="pages" checked>All pages</label>
            <div class="pagesrow"><label class="opt"><input type="radio" name="pages">Pages:</label><input class="field" type="text" aria-label="Page numbers"></div>
            <p class="hint">Enter page numbers and/or page<br>ranges separated by commas and<br>dashes.&#160; For example, 1, 3, 5-12</p>
          </div>
        </section>
        <section class="card">
          <h3>Region Selection</h3>
          <div class="cbody regionbody">
            <label for="regions">Look for a barcode:</label>
            <select id="regions" size="4"><option>PermitNumber (714, 0, 554, 215)</option></select>
            <div class="pair"><button type="button" class="push">Add</button><button type="button" class="push flat">Remove</button></div>
            <div class="form">
              <label for="fn">Name:</label><input class="field" id="fn" value="PermitNumber" disabled>
              <label for="ft">Top:</label><span class="spin"><input class="field" id="ft" value="714" disabled><i><svg><use href="#down"/></svg><svg><use href="#down"/></svg></i></span>
              <label for="fl">Left:</label><span class="spin"><input class="field" id="fl" value="0" disabled><i><svg><use href="#down"/></svg><svg><use href="#down"/></svg></i></span>
              <label for="fh">Height:</label><span class="spin"><input class="field" id="fh" value="554" disabled><i><svg><use href="#down"/></svg><svg><use href="#down"/></svg></i></span>
              <label for="fw">Width:</label><span class="spin"><input class="field" id="fw" value="215" disabled><i><svg><use href="#down"/></svg><svg><use href="#down"/></svg></i></span>
              <label for="fu">Unit:</label><span class="pick unit"><select id="fu" disabled><option>Pixels</option></select><svg><use href="#down"/></svg></span>
            </div>
          </div>
        </section>
        <section class="card">
          <h3>Barcode Type</h3>
          <div class="cbody types">
            <p>Choose the types of barcodes:</p>
            <label class="opt"><input type="checkbox" checked>Code 39</label>
            <label class="opt"><input type="checkbox">Code 128</label>
            <label class="opt"><input type="checkbox">Codabar</label>
            <label class="opt"><input type="checkbox">UPC-A</label>
            <label class="opt"><input type="checkbox">UPC-E</label>
            <label class="opt"><input type="checkbox">Code 93</label>
            <label class="opt"><input type="checkbox">Interleaved 2 of 5</label>
            <label class="opt"><input type="checkbox">EAN 8</label>
            <label class="opt"><input type="checkbox">EAN 13</label>
          </div>
        </section>
      </div>
      <div class="scroll pscroll"><svg><use href="#down"/></svg><div class="thumb"><i class="ribs"></i></div><svg><use href="#down"/></svg></div>
    </div>
    <div class="links small">
      <p>More Options:</p>
      <a href="#"><svg class="i16" viewBox="0 0 16 16"><use href="#checks"/><rect x=".5" y=".5" width="6" height="6" rx="1" fill="#2a6fd6" stroke="#1a4fa6"/><rect x="9.500" y=".5" width="6" height="6" rx="1" fill="#2a6fd6" stroke="#1a4fa6"/><path d="M2 3.300L3.500 5 6 1.500M11 3.300l1.500 1.700L15 1.500" fill="none" stroke="#fff"/></svg><span>Test Processes</span></a>
      <a href="#"><svg class="i16" viewBox="0 0 16 16"><use href="#checks"/><rect x=".5" y=".5" width="6" height="6" rx="1" fill="#e3e9f4" stroke="#a9b6d2"/><rect x="9.500" y=".5" width="6" height="6" rx="1" fill="#e3e9f4" stroke="#a9b6d2"/></svg><span>Test Current Process</span></a>
      <a href="#"><svg class="i16" viewBox="0 0 16 16"><path d="M3.500 6.500h8v7h-8z" fill="#cfe2ff" stroke="#123a7a" stroke-width="1.500"/><path d="M1 15l5-5" stroke="#e9b020" stroke-width="2"/><path d="M12 0l4 5h-2.500v4h-3V5H8z" fill="#48b828" stroke="#1f6a10" stroke-width=".7"/></svg><span>Wizard</span></a>
    </div>
  </aside>
</main>

<footer class="status">
  <span>For Help, press F1</span>
  <span class="fill"></span>
  <span class="info small">Page 2 (42.5 KB): 1704 x 2196, 200 X 200 DPI</span>
  <svg class="i16" viewBox="0 0 16 16"><path d="M.5.500h8v10h-8zM3.500 2.500h8v10h-8zM6.500 4.500h9v11h-9z" fill="#fff" stroke="#888"/><path d="M9 7v6l4.500-3z" fill="#22b422"/></svg>
  <svg class="i16" viewBox="0 0 16 16"><circle cx="8" cy="8" r="7" fill="#3a9a3a"/><path d="M3 11l4-7 3 3 2 5z" fill="#f2c33a"/><circle cx="8" cy="8" r="6.500" fill="none" stroke="#d8281c" stroke-width="2"/><path d="M3.500 12.500l9-9" stroke="#d8281c" stroke-width="2"/></svg>
  <svg class="i16"><use href="#bars"/></svg>
  <svg class="i16"><use href="#floppy"/></svg>
</footer>
</body>
</html>
```
FILE: styles.css
```css
* { box-sizing: border-box; }
body { margin: 0; height: 100vh; display: flex; flex-direction: column; overflow: hidden; background: #f8f5f9; border-right: 1px solid #5f8fc8; color: #000; font: 12px/16px Roboto, "Liberation Sans", sans-serif; }
button, input, select { font: inherit; color: inherit; margin: 0; }
button { border: 0; background: none; padding: 0; display: flex; align-items: center; justify-content: center; }
h1, h2, h3, p, ul { margin: 0; padding: 0; font-size: inherit; font-weight: normal; }
svg { flex: none; display: block; overflow: visible; }
.defs { position: absolute; }
.fill { flex: 1; }
.small { font-size: 11px; }
.i16 { width: 16px; height: 16px; }

.titlebar { height: 24px; display: flex; align-items: center; gap: 9px; padding: 0 4px 0 2px; border-top: 2px solid #10151b; background: linear-gradient(#9ab5d5, #a0bbdc 50%, #b9d2ee); }
.titlebar h1 { flex: 1; }
.winbtns { display: flex; gap: 4px; }
.winbtns button { width: 29px; height: 16px; border: 1px solid #4d5f78; border-radius: 3px; background: linear-gradient(#d5e2f1 50%, #a9c0dc 50%); box-shadow: inset 0 0 0 1px #e9f1fa; }
.winbtns svg { width: 12px; height: 10px; }
.winbtns .close { background: linear-gradient(#e5a193 45%, #c4402a 50%); border-color: #5b1f18; box-shadow: inset 0 0 0 1px #edbcb2; }

.menubar { height: 24px; display: flex; align-items: center; gap: 18px; padding-left: 15px; }

.toolbar { display: flex; align-items: center; background: linear-gradient(#fdfbfd, #fcfafc 60%, #f3f0f4); }
.toolbar .grip { width: 2px; height: 28px; margin: 0 4px 0 3px; background: repeating-linear-gradient(#bbb8bc 0 2px, transparent 2px 4px); }
.toolbar button { width: 36px; height: 36px; }
.toolbar button svg { width: 30px; height: 32px; }
.toolbar .on { border: 1px solid #3399f5; }
.toolbar .on svg { width: 30px; height: 30px; }
.sep { width: 6px; height: 28px; background: linear-gradient(#c2bfc3, #c2bfc3) 3px 0 / 1px 100% no-repeat; }
.main { height: 38px; }
.source { height: 38px; align-self: flex-start; margin: 1px 0; }
.source .grip { margin: 0 6px; }
.source button:not(.overflow) svg { width: 30px; height: 29px; }
.source .grip + button { margin-left: -3px; }
.toolbar .overflow, .bar .overflow { align-self: flex-end; align-items: flex-end; width: 10px; height: 14px; background: linear-gradient(#f6f3f6, #c9c7ca); }
.toolbar .overflow svg, .bar .overflow svg { width: 7px; height: 9px; }
.source label { padding-left: 4px; }
.pick { display: grid; align-items: center; }
.pick > * { grid-area: 1 / 1; }
.pick select { appearance: none; border: 0; background: #fff; height: 24px; width: 100%; padding: 0 20px 0 4px; overflow: hidden; }
.pick > svg { justify-self: end; width: 6px; height: 4px; margin-right: 6px; pointer-events: none; }
.dir { width: 260px; margin-left: 4px; }
.ftype { width: 119px; margin: 0 7px 0 5px; }
.ab s, .ab b { font: bold 22px/24px "Liberation Sans", sans-serif; color: #0b1c50; }
.ab s { color: #a5a3a6; text-decoration: line-through 4px #e01c10; }

.workspace { flex: 1; min-height: 0; display: grid; grid-template-columns: 224px minmax(0, 1fr) 226px; gap: 4px; }
.side, .center { min-height: 0; min-width: 0; display: flex; flex-direction: column; }
.center { gap: 4px; padding-top: 1px; }
.left { gap: 4px; padding-top: 1px; }
.right { padding-top: 1px; background: #fff; }
.pane { background: #fff; }
.session { flex: 1; }
.revision { height: 266px; }
.panehead { height: 19px; flex: none; display: flex; align-items: center; gap: 5px; padding: 0 4px 0 3px; border: 1px solid #a5a3a7; border-width: 1px 0 0 1px; background: #cbc9cd; color: #222; line-height: 14px; }
.panehead h2 { flex: 1; }
.panehead button { width: 10px; height: 14px; }
.panehead .dn { width: 7px; height: 4px; margin-top: 3px; }
.panehead .pn { width: 9px; height: 11px; }
.panehead .cr { width: 9px; height: 9px; }

.tree { padding: 3px 0 0 3px; }
.tree ul { list-style: none; margin-left: 19px; }
.tree > ul { margin-left: 8px; }
.tree li { background: repeating-linear-gradient(#777 0 1px, transparent 1px 2px) 0 0 / 1px 100% no-repeat, repeating-linear-gradient(90deg, #777 0 1px, transparent 1px 2px) 0 8px / 11px 1px no-repeat; }
.tree li:last-child { background-size: 1px 8px, 11px 1px; }
.row { display: flex; align-items: center; height: 16px; white-space: nowrap; }
.row > svg { margin-right: 5px; }
.slot { width: 11px; display: flex; }
.minus { flex: none; width: 9px; height: 9px; margin-left: -4px; border: 1px solid #9a989c; background: linear-gradient(#335, #335) center / 5px 1px no-repeat #fff; }
.sel span { background: #3399ff; color: #fff; padding: 0 3px; margin-left: -3px; line-height: 14px; }
.tall { padding-top: 4px; }
.tall .row { height: 18px; }

.viewer { flex: 1; min-height: 0; display: grid; grid-template: 25px minmax(0, 1fr) 26px / minmax(0, 1fr) 18px; border: 1px solid #a5a3a7; }
.bar { grid-column: 1 / 3; display: flex; align-items: center; background: linear-gradient(#fdfcfd, #f5f2f6); padding-right: 1px; }
.bar button { width: 22px; height: 22px; }
.bar .sep { height: 16px; width: 8px; }
.bar .text { width: auto; gap: 8px; padding-left: 4px; }
.bar .text svg { width: 6px; height: 4px; }
.combo { display: flex; width: 117px; height: 23px; margin: 0 2px 0 1px; border: 1px solid #3399ff; background: #fff; }
.combo input { width: 0; flex: 1; border: 0; padding: 0 2px; background: linear-gradient(#3399ff, #3399ff) 1px 3px / 25px 14px no-repeat #fff; color: #fff; }
.bar .combo button { width: 12px; height: 21px; background: #c5e0fc; border-left: 1px solid #3399ff; }
.combo svg { width: 5px; height: 4px; }
.vtop > button:first-child { width: 23px; }
.canvas { background: #a9a7aa; overflow: hidden; display: grid; justify-items: start; align-items: start; }
.canvas > * { grid-area: 1 / 1; }
.scan { width: 597px; height: 712px; overflow: hidden; font-family: "Liberation Sans", Arial, sans-serif; fill: #1c1c1c; }
.region { overflow: hidden; }
.pointer { width: 13px; height: 20px; margin: 60px 0 0 663px; }
.t25 { font-size: 25px; font-weight: bold; }
.t23 { font-size: 23px; font-weight: bold; }
.t16 { font-size: 16px; }
.b16 { font-size: 16px; font-weight: bold; }
.b14 { font-size: 14px; font-weight: bold; }
.t14 { font-size: 14px; }
.t15 { font-size: 15px; }
.stamp { font-size: 42px; }
.seal { font-size: 12px; font-weight: bold; }
.zone { font-size: 28px; fill: #000; }
.scroll { display: flex; flex-direction: column; align-items: center; background: #f1eff2; padding: 5px 1px; gap: 6px; }
.scroll > svg { width: 7px; height: 4px; }
.scroll > svg:first-child, .mini svg:first-child, .spin svg:first-child { transform: rotate(180deg); }
.thumb { width: 100%; display: flex; align-items: center; justify-content: center; border: 1px solid #9a989c; border-radius: 2px; background: linear-gradient(90deg, #fbfafb, #e4e2e6 50%, #c8c6ca); }
.ribs { width: 8px; height: 9px; background: repeating-linear-gradient(#555 0 1px, transparent 1px 3px); }
.vscroll .thumb { flex: 0 1 89%; }
.vscroll > svg:last-child, .pscroll > svg:last-child { margin-top: auto; }
.pageno { width: 98px; height: 24px; border: 1px solid #a5a3a7; background: #f3f0f4; margin: 0 6px 0 4px; }
.of { width: 23px; white-space: nowrap; color: #555; }
.vbottom .on { border: 1px solid #3399ff; }

.output { flex: none; }
.outbody { height: 20px; background: #fff; border: 1px solid #a5a3a7; border-top: 0; border-right: 0; display: flex; justify-content: flex-end; }
.mini { width: 16px; display: flex; flex-direction: column; align-items: center; justify-content: space-around; background: #f1eff2; }
.mini svg { width: 6px; height: 3px; fill: #777; }
.tabs { height: 23px; display: flex; align-items: flex-start; }
.tabs button { height: 15px; margin-top: 3px; padding: 0 4px; border-right: 1px solid #a5a3a7; color: #555; }
.tabs .cur { height: 20px; margin-top: 0; margin-left: -1px; border: 1px solid #a5a3a7; border-top: 0; border-radius: 0 0 3px 3px; background: #fff; color: #000; }

.banner { padding: 6px 6px 5px; height: 37px; flex: none; background: linear-gradient(#1456bc, #5b8edc); }
.bannerbox { height: 26px; display: flex; align-items: center; border: 1px solid #02102c; padding: 0 5px 0 8px; background: linear-gradient(90deg, #1e5cbe, #7fa8e8); }
.bannerbox a { flex: 1; margin-left: 14px; color: #fff; font-weight: bold; font-size: 13px; }
.chev { width: 8px; height: 10px; }
.help { width: 16px; height: 16px; }
.props { flex: 1; min-height: 0; display: grid; grid-template-columns: minmax(0, 1fr) 16px; background: #ddeafe; border-bottom: 1px solid #1c5cc0; }
.cards { overflow: hidden; padding: 7px 8px 0 6px; display: flex; flex-direction: column; gap: 6px; }
.card { flex: none; border: 1px solid #1c5cc0; }
.card h3 { height: 25px; padding-left: 5px; border-bottom: 1px solid #1c5cc0; background: linear-gradient(90deg, #f0f5ff, #6b95e8); color: #5842b4; font-size: 14px; font-weight: bold; line-height: 25px; }
.cbody { padding: 2px 6px 13px; display: flex; flex-direction: column; line-height: 15px; }
.opt { display: flex; align-items: center; gap: 6px; height: 21px; }
.opt input { appearance: none; width: 13px; height: 13px; border: 1px solid #8e8c90; background: linear-gradient(135deg, #d3d1d4, #f8f6f8); box-shadow: inset 0 0 0 1px #f6f4f6; }
.opt input[type=radio] { border-radius: 50%; }
.opt input[type=radio]:checked { background: radial-gradient(circle, #4fc0e8 0 1px, #0b4d78 3px, #e6f0f6 4px); }
.types .opt input:checked { background: #e6e8f0; display: grid; place-items: center; }
.types .opt input:checked::before { content: ""; width: 4px; height: 8px; margin-bottom: 2px; border: solid #3350a8; border-width: 0 2px 2px 0; transform: rotate(40deg); }
.field { border: 1px solid #b0adb2; border-radius: 2px; background: #f5f2f6; height: 20px; width: 100%; min-width: 0; padding: 0 3px; }
.field:disabled { color: #777; }
.range { padding-bottom: 7px; }
.pagesrow { display: flex; align-items: center; gap: 6px; }
.pagesrow .opt { flex: none; }
.hint { line-height: 13px; padding-left: 19px; white-space: nowrap; }
#regions { appearance: none; height: 69px; padding: 0; border: 1px solid #8e8c90; background: #fff; overflow: hidden; }
#regions option { padding: 1px 3px; min-height: 0; }
.pair { display: grid; grid-template-columns: 1fr 1fr; gap: 8px; padding: 7px 1px; border-bottom: 1px solid #a09ea6; box-shadow: 0 1px #fff; }
.push { height: 21px; border: 1px solid #77757a; border-radius: 3px; background: linear-gradient(#f6f5f6 45%, #dad8dc 55%, #cfcdd1); }
.flat { border-color: #b5b3b8; background: #f6f6fa; color: #123f9c; }
.form { display: grid; grid-template-columns: 38px minmax(0, 1fr); gap: 6px 3px; align-items: center; padding: 7px 0 0 3px; }
.regionbody { padding-bottom: 15px; }
.spin { width: 60px; display: grid; }
.spin > * { grid-area: 1 / 1; }
.spin .field { border-radius: 0; }
.spin i { justify-self: end; width: 13px; margin: 2px; display: grid; gap: 2px; }
.spin svg { width: 100%; height: 7px; padding: 2px 4px; background: #e6e4e7; border: 1px solid #bbb; fill: #888; }
.unit { width: 109px; }
.unit select { height: 21px; border: 1px solid #b0adb2; border-radius: 3px; background: #f5f4f6; color: #777; padding-left: 3px; opacity: 1; }
.unit > svg { width: 8px; height: 4px; margin-right: 4px; fill: #888; }
.pscroll .thumb { flex: 0 0 382px; }
.links { flex: none; height: 71px; padding: 0 3px; background: #fff; }
.links a { display: flex; align-items: center; gap: 4px; height: 18px; padding-left: 3px; color: #0000e8; text-decoration: none; }
.links a span { text-decoration: underline; }

.status { height: 24px; flex: none; display: flex; align-items: center; gap: 12px; padding: 0 17px 0 4px; background: #f5f2f6; }
```
